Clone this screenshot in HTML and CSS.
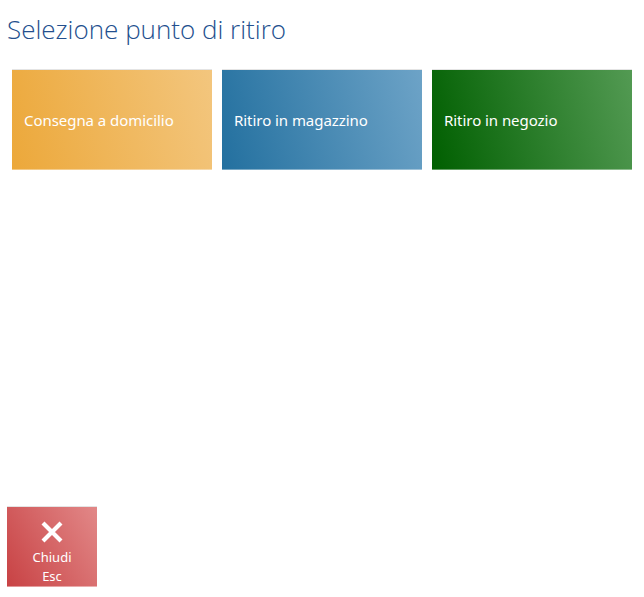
FILE: index.html
```html
<!DOCTYPE html>
<html lang="it">
<head>
<meta charset="utf-8">
<title>Selezione punto di ritiro</title>
<link rel="stylesheet" href="styles.css">
</head>
<body>
<div class="page">
  <h1 class="title">Selezione punto di ritiro</h1>
  <div class="tiles">
    <div class="tile tile-orange">Consegna a domicilio</div>
    <div class="tile tile-blue">Ritiro in magazzino</div>
    <div class="tile tile-green">Ritiro in negozio</div>
  </div>
  <div class="footer">
    <button class="close-btn">
      <svg class="close-icon" viewBox="0 0 24 24" width="24" height="24">
        <path d="M3 3 L21 21 M21 3 L3 21" stroke="#fff" stroke-width="4.2" fill="none"/>
      </svg>
      <span class="close-label">Chiudi</span>
      <span class="close-key">Esc</span>
    </button>
  </div>
</div>
</body>
</html>
```

FILE: styles.css
```css
html, body {
  margin: 0;
  padding: 0;
  background: #fff;
}
body {
  font-family: "Noto Sans", "Open Sans", sans-serif;
}
.page {
  height: 597px;
  display: flex;
  flex-direction: column;
}
.title {
  margin: 12px 0 0 7px;
  font-family: "Open Sans", "Noto Sans", sans-serif;
  font-weight: 300;
  font-size: 26px;
  line-height: 34px;
  color: #234f8e;
  letter-spacing: 0;
}
.tiles {
  display: flex;
  gap: 10px;
  padding: 24px 0 0 12px;
}
.tile {
  width: 200px;
  height: 100px;
  box-sizing: border-box;
  display: flex;
  align-items: center;
  padding: 0 12px 0 12px;
  color: #fff;
  font-size: 15px;
  letter-spacing: -0.05px;
  box-shadow: 0 -1px 0 #e4e4e4;
  border-bottom: 1px solid rgba(255,255,255,0.35);
}
.tile-orange {
  background: linear-gradient(75deg, #eca83a, #f3c67e);
}
.tile-blue {
  background: linear-gradient(75deg, #23709f, #6da3c7);
}
.tile-green {
  background: linear-gradient(75deg, #005f00, #539a53);
}
.footer {
  margin-top: auto;
  padding: 0 0 10px 7px;
}
.close-btn {
  width: 90px;
  height: 80px;
  border: none;
  margin: 0;
  padding: 13px 0 0 0;
  box-sizing: border-box;
  display: flex;
  flex-direction: column;
  align-items: center;
  background: linear-gradient(60deg, #c84244, #e28888);
  color: #fff;
  font-family: "Noto Sans", "Open Sans", sans-serif;
  font-size: 13px;
  line-height: 19px;
  box-shadow: 0 -1px 0 #e4e4e4;
  border-bottom: 1px solid rgba(255,255,255,0.35);
}
.close-icon {
  width: 24px;
  height: 24px;
  margin-bottom: 4px;
}
```
